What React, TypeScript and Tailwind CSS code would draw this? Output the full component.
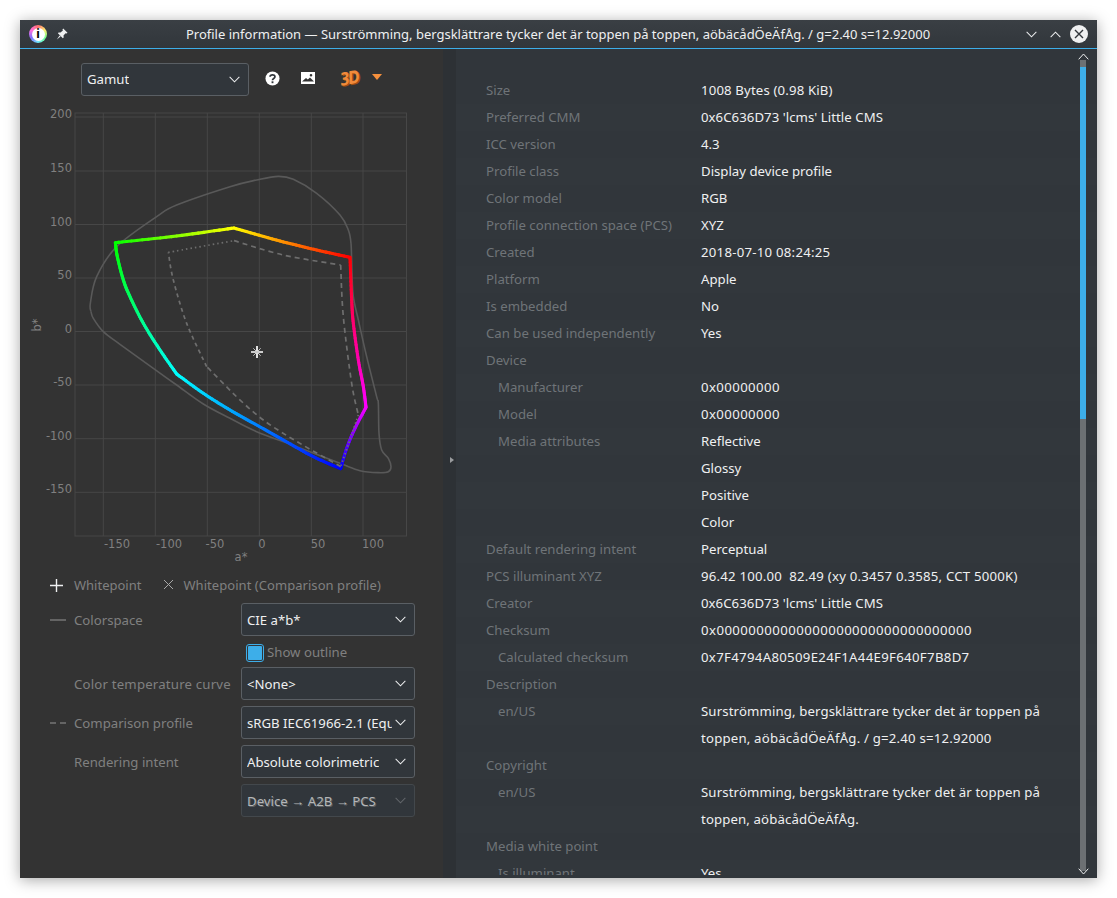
import React from 'react'

type Pt = [number, number]

// points are read off the 3x crop, so map them back to page pixels
const z = ([x, y]: Pt): Pt => [30 + x / 3, 100 + y / 3]

const outline: Pt[] = [
  [183, 635], [181, 610], [200, 530], [260, 440], [380, 350], [440, 315], [600, 260], [680, 240], [745, 229],
  [790, 238], [860, 280], [930, 345], [955, 390], [963, 430], [966, 520], [970, 590], [985, 660], [1010, 770],
  [1040, 890], [1045, 910], [1047, 1000], [1055, 1050], [1075, 1075], [1083, 1100], [1075, 1115], [1045, 1118],
  [990, 1112], [930, 1090], [800, 1040], [680, 995], [600, 955], [520, 912], [440, 855], [370, 805], [270, 733], [220, 695], [190, 655], [183, 635],
]

const gamut: { pts: Pt[]; from: number[]; to: number[] }[] = [
  { pts: [[256, 428], [440, 408], [612, 384]], from: [0, 255, 0], to: [255, 255, 0] },
  { pts: [[612, 384], [750, 423], [860, 450], [960, 472]], from: [255, 255, 0], to: [255, 0, 0] },
  { pts: [[960, 472], [965, 600], [970, 670], [985, 780], [1000, 860], [1008, 922]], from: [255, 0, 0], to: [255, 0, 255] },
  { pts: [[1008, 922], [975, 985], [950, 1045], [932, 1106]], from: [255, 0, 255], to: [0, 0, 255] },
  { pts: [[932, 1106], [850, 1070], [760, 1020], [680, 975], [600, 930], [520, 880], [440, 822]], from: [0, 0, 255], to: [0, 255, 255] },
  { pts: [[440, 822], [390, 750], [340, 670], [300, 590], [280, 540], [262, 470], [256, 428]], from: [0, 255, 255], to: [0, 255, 0] },
]

const comparison: { pts: Pt[]; dash: string }[] = [
  { pts: [[415, 457], [612, 422]], dash: '1.5 3' },
  { pts: [[612, 422], [760, 465], [932, 495]], dash: '5 4' },
  { pts: [[932, 495], [940, 650], [965, 850], [985, 945]], dash: '5 4' },
  { pts: [[985, 945], [932, 1100]], dash: '1.5 2.5' },
  { pts: [[932, 1100], [700, 960], [530, 800]], dash: '5 4' },
  { pts: [[530, 800], [470, 670], [430, 540], [415, 457]], dash: '4 3.5' },
]

const smooth = (raw: Pt[]) => {
  const p = raw.map(z)
  let d = `M${p[0][0]} ${p[0][1]}`
  for (let i = 0; i < p.length - 1; i++) {
    const a = p[Math.max(i - 1, 0)]
    const b = p[i]
    const c = p[i + 1]
    const e = p[Math.min(i + 2, p.length - 1)]
    d += `C${b[0] + (c[0] - a[0]) / 6} ${b[1] + (c[1] - a[1]) / 6} ${c[0] - (e[0] - b[0]) / 6} ${c[1] - (e[1] - b[1]) / 6} ${c[0]} ${c[1]}`
  }
  return d
}

// catmull-rom through the points, so the coloured edges bend instead of kinking
const densify = (raw: Pt[]) => {
  const p = raw.map(z)
  const out: Pt[] = []
  for (let i = 0; i < p.length - 1; i++) {
    const a = p[Math.max(i - 1, 0)]
    const b = p[i]
    const c = p[i + 1]
    const e = p[Math.min(i + 2, p.length - 1)]
    for (let k = 0; k < 12; k++) {
      const t = k / 12
      const f = (j: number) =>
        0.5 * (2 * b[j] + (c[j] - a[j]) * t + (2 * a[j] - 5 * b[j] + 4 * c[j] - e[j]) * t * t + (3 * b[j] - a[j] - 3 * c[j] + e[j]) * t * t * t)
      out.push([f(0), f(1)])
    }
  }
  out.push(p[p.length - 1])
  return out
}

const segments = (pts: Pt[], from: number[], to: number[]) => {
  const p = densify(pts)
  const lens = p.slice(1).map((q, i) => Math.hypot(q[0] - p[i][0], q[1] - p[i][1]))
  const total = lens.reduce((a, b) => a + b, 0)
  let done = 0
  return lens.map((len, i) => {
    const m = (done + len / 2) / total
    done += len
    const c = from.map((v, j) => Math.round(v + (to[j] - v) * m))
    return { a: p[i], b: p[i + 1], c: `rgb(${c.join(',')})` }
  })
}

const xTicks = [[-150, 103.3, 117], [-100, 155.3, 169], [-50, 207.3, 215], [0, 259.3, 262], [50, 311.3, 318], [100, 363, 373]]
const yTicks = [[200, 117], [150, 171], [100, 224.5], [50, 278], [0, 331.5], [-50, 385], [-100, 438.7], [-150, 492.3]]

const Chart = () => (
  <svg viewBox="30 100 390 470" className="w-[390px] h-[470px] block">
    <rect x="75" y="113" width="331.5" height="423" fill="none" stroke="#474747" />
    {xTicks.map(t => <line key={t[0]} x1={t[1]} x2={t[1]} y1="113" y2="536" stroke="#474747" />)}
    {yTicks.map(t => <line key={t[0]} y1={t[1]} y2={t[1]} x1="75" x2="406.5" stroke="#474747" />)}
    <g fontFamily="'DejaVu Sans', sans-serif" fontSize="11.5" fill="#808080">
      {yTicks.map(t => <text key={t[0]} x="72" y={t[1] + 1} textAnchor="end">{t[0]}</text>)}
      {xTicks.map(t => <text key={t[0]} x={t[2]} y="548" textAnchor="middle">{t[0]}</text>)}
      <text x="241" y="561" textAnchor="middle">a*</text>
      <text x="0" y="0" textAnchor="middle" transform="translate(41 325) rotate(-90)">b*</text>
    </g>
    <path d={smooth(outline)} fill="none" stroke="#595959" strokeWidth="1.6" />
    {gamut.map((g, i) =>
      segments(g.pts, g.from, g.to).map((s, k) => (
        <line key={`${i}-${k}`} x1={s.a[0]} y1={s.a[1]} x2={s.b[0]} y2={s.b[1]} stroke={s.c} strokeWidth="3.1" strokeLinecap="round" />
      )),
    )}
    {comparison.map((c, i) => (
      <path key={i} d={smooth(c.pts)} fill="none" stroke="#6e6e6e" strokeWidth="1.7" strokeDasharray={c.dash} />
    ))}
    <path d="M257 346v12M251 352h12" stroke="#fff" strokeWidth="1.7" />
    <path d="M253.3 348.3l7.4 7.4M260.7 348.3l-7.4 7.4" stroke="#c8c8c8" strokeWidth="1" />
  </svg>
)

const Chevron = ({ className = 'stroke-[#eff0f1]' }: { className?: string }) => (
  <svg viewBox="0 0 12 7" className={`w-[11px] h-[7px] shrink-0 fill-none ${className}`}>
    <path d="M0.7 0.7L6 6L11.3 0.7" strokeWidth="1.1" />
  </svg>
)

const Combo = ({ text, className = '', clip = 'pt-[2px]' }: { text: string; className?: string; clip?: string }) => (
  <div className={`flex items-center justify-between h-[33px] border border-[#5a5f64] rounded-[3px] bg-[#31363b] pl-[5px] pr-[8px] text-[#eff0f1] ${className}`}>
    <span className={`whitespace-nowrap overflow-hidden ${clip}`}>{text}</span>
    <Chevron />
  </div>
)

const Row = ({ swatch, label, labelClass = '', children }: { swatch?: React.ReactNode; label?: string; labelClass?: string; children: React.ReactNode }) => (
  <div className="flex items-center pl-[30px] mb-[6px]">
    <div className="w-[24px] flex items-center">{swatch}</div>
    <div className={`w-[167px] pt-[2px] text-[#808080] whitespace-nowrap ${labelClass}`}>{label}</div>
    {children}
  </div>
)

// label, value, indented, extra spacing for the value (digits run wider in the reference)
const info: [string, string, boolean, string][] = [
  ['Size', '1008 Bytes (0.98 KiB)', false, 'tracking-[0.15px]'],
  ['Preferred CMM', "0x6C636D73 'lcms' Little CMS", false, 'tracking-[0.05px]'],
  ['ICC version', '4.3', false, ''],
  ['Profile class', 'Display device profile', false, ''],
  ['Color model', 'RGB', false, ''],
  ['Profile connection space (PCS)', 'XYZ', false, ''],
  ['Created', '2018-07-10 08:24:25', false, 'tracking-[0.25px]'],
  ['Platform', 'Apple', false, ''],
  ['Is embedded', 'No', false, ''],
  ['Can be used independently', 'Yes', false, ''],
  ['Device', '', false, ''],
  ['Manufacturer', '0x00000000', true, 'tracking-[0.4px]'],
  ['Model', '0x00000000', true, 'tracking-[0.4px]'],
  ['Media attributes', 'Reflective', true, ''],
  ['', 'Glossy', false, ''],
  ['', 'Positive', false, ''],
  ['', 'Color', false, ''],
  ['Default rendering intent', 'Perceptual', false, ''],
  ['PCS illuminant XYZ', '96.42 100.00  82.49 (xy 0.3457 0.3585, CCT 5000K)', false, 'tracking-[0.22px]'],
  ['Creator', "0x6C636D73 'lcms' Little CMS", false, 'tracking-[0.05px]'],
  ['Checksum', '0x00000000000000000000000000000000', false, 'tracking-[0.44px]'],
  ['Calculated checksum', '0x7F4794A80509E24F1A44E9F640F7B8D7', true, 'tracking-[0.32px]'],
  ['Description', '', false, ''],
  ['en/US', 'Surströmming, bergsklättrare tycker det är toppen på', true, 'tracking-[0.13px]'],
  ['', 'toppen, aöbäcådÖeÄfÅg. / g=2.40 s=12.92000', false, 'tracking-[0.2px]'],
  ['Copyright', '', false, ''],
  ['en/US', 'Surströmming, bergsklättrare tycker det är toppen på', true, 'tracking-[0.13px]'],
  ['', 'toppen, aöbäcådÖeÄfÅg.', false, 'tracking-[0.13px]'],
  ['Media white point', '', false, ''],
  ['Is illuminant', 'Yes', true, ''],
]

const App = () => {
  return (
    <div className="min-h-[898px] bg-white pt-[20px] pl-[20px] text-[13.2px] font-['Noto_Sans',sans-serif]">
      <div className="w-[1077px] h-[858px] flex flex-col bg-[#333333] shadow-[0_2px_14px_rgba(0,0,0,0.35)]">
        {/* titlebar */}
        <div className="h-[29px] shrink-0 flex items-center border-b border-[#3daee9] bg-gradient-to-b from-[#3a3f44] to-[#31363b] pr-[9px]">
          <div className="ml-[9px] w-[18px] h-[18px] rounded-full flex items-center justify-center bg-[conic-gradient(#ff7070,#ffee70,#70ff90,#70e8ff,#8070ff,#ff70e0,#ff7070)]">
            <div className="w-[13px] h-[13px] rounded-full bg-white flex items-center justify-center text-black font-bold text-[12px] leading-none">i</div>
          </div>
          <svg viewBox="0 0 12 12" className="w-[12px] h-[12px] ml-[9px] fill-[#eff0f1]">
            <path d="M7.2 0.5L11.5 4.8L10.6 5.5L9.6 5.2L7.5 7.6L7.7 9.5L6.8 10.2L1.9 5.2L2.6 4.4L4.5 4.6L6.9 2.5L6.5 1.4ZM3.6 7.6L4.6 8.6L0.8 11.4Z" />
          </svg>
          <div className="flex-1 text-center text-[13px] text-[#eff0f1] whitespace-nowrap pl-[22px] pt-[1px]">
            Profile information — Surströmming, bergsklättrare tycker det är toppen på toppen, aöbäcådÖeÄfÅg. / g=2.40 s=12.92000
          </div>
          <Chevron className="stroke-[#eff0f1]" />
          <svg viewBox="0 0 12 7" className="w-[11px] h-[7px] ml-[13px] fill-none stroke-[#eff0f1]">
            <path d="M0.7 6.3L6 1L11.3 6.3" strokeWidth="1.1" />
          </svg>
          <div className="ml-[9px] w-[18px] h-[18px] rounded-full bg-[#eff0f1] flex items-center justify-center">
            <svg viewBox="0 0 10 10" className="w-[10px] h-[10px] stroke-[#31363b] fill-none">
              <path d="M1 1L9 9M9 1L1 9" strokeWidth="1.4" />
            </svg>
          </div>
        </div>

        <div className="flex-1 flex min-h-0">
          {/* left side */}
          <div className="w-[423px] shrink-0 flex flex-col">
            <div className="h-[51px] shrink-0 flex items-start pt-[14px] pl-[61px]">
              <Combo text="Gamut" className="w-[168px]" clip="pt-[1px]" />
              <svg viewBox="0 0 16 16" className="w-[15px] h-[15px] ml-[16px] mt-[8px]">
                <circle cx="8" cy="8" r="7.5" fill="#fff" />
                <path d="M5.4 6.2C5.5 3.6 10.6 3.4 10.6 6.1C10.6 8 8 7.8 8 9.8" fill="none" stroke="#31363b" strokeWidth="1.9" />
                <rect x="7" y="11" width="2" height="2" fill="#31363b" />
              </svg>
              <svg viewBox="0 0 14 12" className="w-[14px] h-[12px] ml-[21px] mt-[9px]">
                <path fillRule="evenodd" fill="#fff" d="M0 0H14V12H0ZM1 9.5H13L9 5.5L6.8 7.6L5 6ZM10 2A1.3 1.3 0 1 0 10 4.6A1.3 1.3 0 1 0 10 2Z" />
              </svg>
              <span className="inline-block w-[17px] ml-[25px] mt-[4px] text-[14px] font-bold italic text-[#f08a3c] [text-shadow:1px_1px_0_#a04f10] tracking-[-1.5px] leading-[22px] -rotate-[10deg] scale-y-125 font-['DejaVu_Sans',sans-serif]">3D</span>
              <svg viewBox="0 0 10 6" className="w-[10px] h-[6px] ml-[15px] mt-[11px]">
                <path d="M0 0H10L5 6Z" fill="#f6903d" />
              </svg>
            </div>
            <div className="pl-[10px]">
              <Chart />
            </div>
            <div className="h-[33px] flex items-center pl-[30px] pb-[2px] text-[#808080] whitespace-nowrap">
              <svg viewBox="0 0 13 13" className="w-[13px] h-[13px] stroke-[#eff0f1] mr-[11px] mb-[1px]">
                <path d="M6.5 0V13M0 6.5H13" strokeWidth="1.4" />
              </svg>
              <span className="text-[13px]">Whitepoint</span>
              <svg viewBox="0 0 11 11" className="w-[11px] h-[11px] stroke-[#a8a8a8] ml-[22px] mr-[9px] mb-[2px]">
                <path d="M1 1L10 10M10 1L1 10" strokeWidth="1" />
              </svg>
              <span className="text-[13px] tracking-[0.05px]">Whitepoint (Comparison profile)</span>
            </div>
            <Row swatch={<div className="w-[16px] h-[2px] bg-[#646464]" />} label="Colorspace">
              <Combo text="CIE a*b*" className="w-[174px]" />
            </Row>
            <div className="flex items-center h-[25px] pl-[226px] -mt-[3px] mb-[3px] pt-[2px] text-[#808080]">
              <div className="w-[18px] h-[18px] rounded-[3px] border border-[#3daee9] bg-[#31363b] flex items-center justify-center mr-[3px]">
                <div className="w-[14px] h-[14px] rounded-[1px] bg-[#3daee9]" />
              </div>
              Show outline
            </div>
            <Row label="Color temperature curve" labelClass="tracking-[0.2px]">
              <Combo text="<None>" className="w-[174px]" />
            </Row>
            <Row swatch={<div className="w-[16px] h-[2px] border-t-2 border-dashed border-[#646464]" />} label="Comparison profile">
              <Combo text="sRGB IEC61966-2.1 (Equal-energy)" className="w-[174px]" clip="w-[145px] pt-[2px]" />
            </Row>
            <Row label="Rendering intent">
              <Combo text="Absolute colorimetric" className="w-[174px]" />
            </Row>
            <div className="pl-[221px]">
              <div className="flex items-center justify-between w-[174px] h-[33px] border border-[#43484c] rounded-[3px] bg-[#31363b] pl-[5px] pr-[8px] text-[#b4b6b8] [text-shadow:1px_1px_0_#5a5e62]">
                <span className="whitespace-nowrap pt-[2px]">Device → A2B → PCS</span>
                <Chevron className="stroke-[#63676b]" />
              </div>
            </div>
          </div>

          {/* splitter */}
          <div className="w-[13px] shrink-0 bg-[#2d3135] flex items-center justify-center pb-[8px]">
            <svg viewBox="0 0 4 6" className="w-[4px] h-[6px] ml-[4px]">
              <path d="M0 0L4 3L0 6Z" fill="#9a9c9e" />
            </svg>
          </div>

          {/* right side */}
          <div className="flex-1 min-w-0 relative bg-[#31363b] pt-[28px] overflow-hidden">
            <div className="h-[798px] overflow-hidden">
              {info.map(([label, value, sub, extra], i) => (
                <div key={i} className={`h-[27px] flex items-center whitespace-pre ${i % 2 ? 'bg-[#32373c]' : 'bg-[#31363b]'}`}>
                  <div className={`text-[#6f7478] ${sub ? 'w-[203px] ml-[42px]' : 'w-[215px] ml-[30px]'}`}>{label}</div>
                  <div className={`text-[#eff0f1] ${extra}`}>{value}</div>
                </div>
              ))}
            </div>
            {/* scrollbar sits over the list */}
            <div className="absolute right-[11px] top-[3px] bottom-[3px] w-[6px] flex flex-col items-center">
              <svg viewBox="0 0 11 7" className="w-[11px] h-[7px] shrink-0 stroke-[#eff0f1] fill-none mt-[1px]">
                <path d="M0.7 6.3L5.5 1L10.3 6.3" strokeWidth="1" />
              </svg>
              <div className="w-[6px] h-[7px] bg-[#6c7073] shrink-0" />
              <div className="w-[6px] h-[352px] bg-[#3daee9] shrink-0" />
              <div className="w-[6px] flex-1 bg-[#6c7073]" />
              <svg viewBox="0 0 11 7" className="w-[11px] h-[7px] shrink-0 stroke-[#eff0f1] fill-none -mt-[3px]">
                <path d="M0.7 0.7L5.5 6L10.3 0.7" strokeWidth="1" />
              </svg>
            </div>
          </div>
        </div>
      </div>
    </div>
  )
}

export default App
